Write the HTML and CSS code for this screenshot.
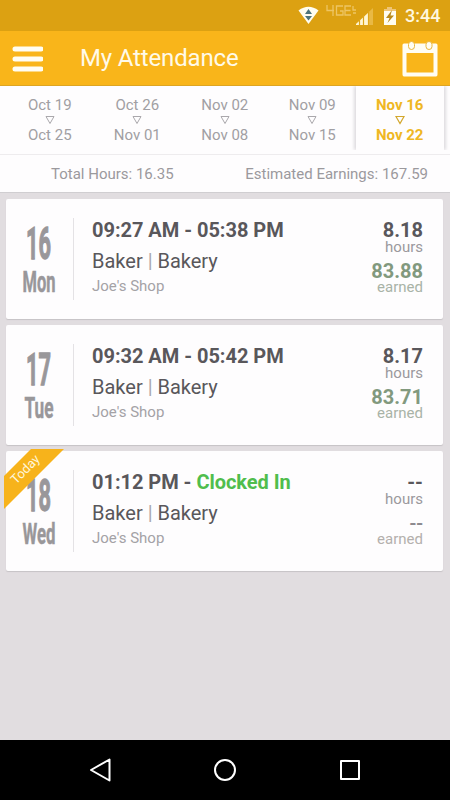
FILE: index.html
```html
<!DOCTYPE html>
<html lang="en">
<head>
<meta charset="utf-8">
<title>My Attendance</title>
<link rel="stylesheet" href="styles.css">
</head>
<body>
<div class="status">
  <svg width="150" height="31" viewBox="0 0 150 31">
    <path d="M-.5 10.500Q9.500 3 19.500 10.500L9.500 24Z" fill="#fffdf0"/>
    <path d="M6 14 9.500 9 13 14ZM6 16H13L9.500 20.500Z" fill="#4d747c"/>
    <g fill="none" stroke="#edc564" stroke-width="1.300">
      <path d="M28 5V10.500H35M34 5V16M44 6H37.500V15H44V11H41M52 6H46V15H52M46 10.500H51.500M54 6V10H57M54 13H57"/>
    </g>
    <path d="M57 25V24L74 8V25Z" fill="#e9b944"/>
    <path d="M57 25V24L69 13V25Z" fill="#fff6d4"/>
    <path d="M60.500 19V25M64.500 15V25M69.500 11V25" stroke="#dfa518" stroke-width="1.200"/>
    <path d="M85 9H88V7H93V9H97V25H85Z" fill="#fffdf0"/>
    <path d="M85 9H88V7H93V9H97V11H85Z" fill="#efc577"/>
    <path d="M93 10 87 18H90.500L88.500 23 95 15.500H91.500Z" fill="#b98a1c"/>
  </svg>
  <span class="clock">3:44</span>
</div>
<header class="bar">
  <svg class="menu" width="32" height="28" viewBox="0 0 32 28">
    <path d="M4 4H30M4 14H30M4 24H30" stroke="#fffdf3" stroke-width="5" stroke-linecap="round"/>
  </svg>
  <h1>My Attendance</h1>
  <svg class="calendar" width="36" height="38" viewBox="0 0 36 38">
    <path fill-rule="evenodd" d="M2 3.500H34Q35.500 3.500 35.500 5V34.500Q35.500 36.500 34 36.500H2Q.5 36.500 .5 34.500V5Q.5 3.500 2 3.500ZM4.500 13V32.500H31.500V13Z" fill="#fffdf3"/>
    <rect x="6.500" y="1.500" width="6" height="8" rx="3" fill="#fffdf3" stroke="#e9b63c"/>
    <rect x="24" y="1.500" width="6" height="8" rx="3" fill="#fffdf3" stroke="#e9b63c"/>
  </svg>
</header>
<nav class="weeks">
  <div class="week"><span>Oct 19</span><svg width="10" height="10" viewBox="0 0 10 10"><path d="M1 1.500H9L5 8.500Z"/></svg><span>Oct 25</span></div>
  <div class="week"><span>Oct 26</span><svg width="10" height="10" viewBox="0 0 10 10"><path d="M1 1.500H9L5 8.500Z"/></svg><span>Nov 01</span></div>
  <div class="week"><span>Nov 02</span><svg width="10" height="10" viewBox="0 0 10 10"><path d="M1 1.500H9L5 8.500Z"/></svg><span>Nov 08</span></div>
  <div class="week"><span>Nov 09</span><svg width="10" height="10" viewBox="0 0 10 10"><path d="M1 1.500H9L5 8.500Z"/></svg><span>Nov 15</span></div>
  <div class="week active"><span>Nov 16</span><svg width="10" height="10" viewBox="0 0 10 10"><path d="M1 1.500H9L5 8.500Z"/></svg><span>Nov 22</span></div>
</nav>
<div class="totals"><span>Total Hours: 16.35</span><span>Estimated Earnings: 167.59</span></div>
<main>
  <article class="card">
    <svg class="date" width="67" height="82" viewBox="0 0 67 82">
      <text class="num" x="20" y="41" textLength="25" lengthAdjust="spacingAndGlyphs">16</text>
      <text class="day" x="16.500" y="73.500" textLength="33" lengthAdjust="spacingAndGlyphs">Mon</text>
    </svg>
    <div class="shift"><div class="time">09:27 AM - 05:38 PM</div><div class="role">Baker <i>|</i> Bakery</div><div class="shop">Joe's Shop</div></div>
    <div class="figures"><b>8.18</b><span>hours</span><b class="money">83.88</b><span class="earned green">earned</span></div>
  </article>
  <article class="card">
    <svg class="date" width="67" height="82" viewBox="0 0 67 82">
      <text class="num" x="20" y="41" textLength="25" lengthAdjust="spacingAndGlyphs">17</text>
      <text class="day" x="18.500" y="73.500" textLength="29" lengthAdjust="spacingAndGlyphs">Tue</text>
    </svg>
    <div class="shift"><div class="time">09:32 AM - 05:42 PM</div><div class="role">Baker <i>|</i> Bakery</div><div class="shop">Joe's Shop</div></div>
    <div class="figures"><b>8.17</b><span>hours</span><b class="money">83.71</b><span class="earned green">earned</span></div>
  </article>
  <article class="card">
    <svg class="date" width="67" height="82" viewBox="0 0 67 82">
      <text class="num" x="20" y="41" textLength="25" lengthAdjust="spacingAndGlyphs">18</text>
      <text class="day" x="16.500" y="73.500" textLength="33" lengthAdjust="spacingAndGlyphs">Wed</text>
    </svg>
    <div class="shift"><div class="time">01:12 PM - <em>Clocked In</em></div><div class="role">Baker <i>|</i> Bakery</div><div class="shop">Joe's Shop</div></div>
    <div class="figures"><b>--</b><span>hours</span><b class="none">--</b><span class="earned">earned</span></div>
    <svg class="ribbon" width="64" height="64" viewBox="0 0 64 64">
      <path d="M28 1H61L1 61V28Z" fill="#f7b31b"/>
      <text x="22.500" y="25.500" transform="rotate(-45 22.500 21.500)" text-anchor="middle">Today</text>
    </svg>
  </article>
</main>
<footer class="nav">
  <svg width="24" height="26" viewBox="0 0 24 26"><path d="M21.500 2.500V23.500L3 13Z"/></svg>
  <svg width="24" height="26" viewBox="0 0 24 26"><circle cx="12" cy="13" r="10"/></svg>
  <svg width="24" height="26" viewBox="0 0 24 26"><rect x="3" y="4" width="18" height="18"/></svg>
</footer>
</body>
</html>
```
FILE: styles.css
```css
* { box-sizing: border-box; }
body {
  margin: 0;
  width: 450px;
  height: 800px;
  display: flex;
  flex-direction: column;
  overflow: hidden;
  background: #e1dde0;
  font-family: Roboto, sans-serif;
  color: #59575b;
}
.status {
  height: 31px;
  background: #dca112;
  display: flex;
  justify-content: flex-end;
  padding-right: 10px;
  flex: none;
}
.status svg { margin-right: -44px; overflow: visible; }
.clock { width: 35px; font-size: 18px; font-weight: 500; line-height: 32px; color: #fff8df; white-space: nowrap; }
.bar {
  height: 55px;
  flex: none;
  display: flex;
  align-items: center;
  padding: 0 12px 0 11px;
  background: #f9b51a;
  border-bottom: 1px solid #dda523;
}
.bar h1 { margin: 0 auto 0 37px; font-size: 24px; font-weight: 400; letter-spacing: -0.15px; color: #fffae8; line-height: 54px; }
.menu { margin-top: 1px; }
.calendar { margin-top: 1px; }
.weeks {
  height: 69px;
  flex: none;
  display: flex;
  background: #fefdfe;
  border-bottom: 1px solid #eeecee;
  padding-left: 6px;
}
.week {
  width: 87.5px;
  height: 64px;
  display: flex;
  flex-direction: column;
  align-items: center;
  padding-top: 10px;
  font-size: 15px;
  line-height: 18px;
  color: #a19fa3;
}
.week svg { margin: 1px 0; fill: none; stroke: #aaa8ac; }
.week.active { color: #efb723; font-weight: 700; box-shadow: -2px 0 3px #dedcdf, 2px 0 3px #dedcdf; clip-path: inset(0 -6px); }
.week.active svg { stroke: #d3a72d; stroke-width: 1.2; }
.totals {
  height: 38px;
  flex: none;
  display: flex;
  justify-content: space-between;
  padding: 0 22px 0 51px;
  background: #fefdfe;
  border-bottom: 1px solid #d0ced1;
  font-size: 15px;
  line-height: 38px;
  color: #9b999d;
}
main { flex: 1; padding: 6px 7px 0 6px; display: flex; flex-direction: column; gap: 6px; }
.card {
  position: relative;
  height: 120px;
  display: flex;
  align-items: flex-start;
  background: #fefdfe;
  border-radius: 2px;
  box-shadow: 0 1px 1px #c6c3c6;
}
.date { margin-top: 19px; border-right: 1px solid #e4e2e5; box-sizing: content-box; overflow: visible; }
.date text { fill: #99979a; stroke: #99979a; font-weight: 700; }
.num { font-size: 45px; stroke-width: 1.3px; }
.day { font-size: 29px; stroke-width: 0.5px; }
.shift { margin-left: 18px; padding-top: 18px; flex: 1; }
.time { font-size: 20px; font-weight: 700; line-height: 26px; letter-spacing: -0.03px; }
.time em { font-style: normal; color: #50bd4d; }
.role { font-size: 20px; line-height: 36px; }
.role i { font-style: normal; color: #aaa7ab; }
.shop { font-size: 15px; line-height: 15px; color: #a4a2a6; }
.figures { display: flex; flex-direction: column; align-items: flex-end; padding: 21px 20px 0 0; font-size: 15px; line-height: 15px; color: #9b999d; }
.figures b { font-size: 20px; line-height: 20px; color: #59575b; }
.figures .money { margin-top: 7px; line-height: 18px; color: #82997e; }
.figures .none { margin-top: 7px; line-height: 18px; font-weight: 500; color: #8d8a8f; }
.figures .earned { color: #b4b0ad; }
.figures .green { color: #a9b3a7; }
.ribbon { position: absolute; left: -3px; top: -3px; }
.ribbon text { font-size: 13px; fill: #fff6da; }
.nav { height: 60px; flex: none; display: flex; align-items: center; justify-content: center; gap: 101px; background: #000; }
.nav svg { fill: none; stroke: #fff; stroke-width: 2; stroke-linejoin: round; }
```
